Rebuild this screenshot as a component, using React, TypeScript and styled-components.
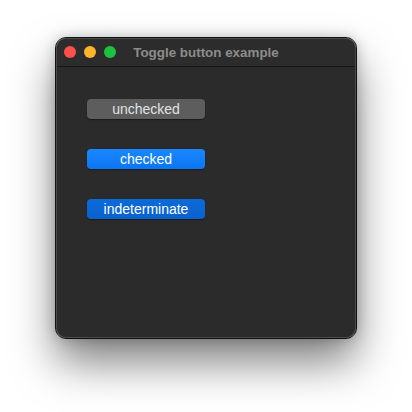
import styled, { createGlobalStyle } from "styled-components";

const GlobalStyle = createGlobalStyle`
  body {
    margin: 0;
    background: #ffffff;
    font-family: "Liberation Sans", Arial, sans-serif;
  }
`;

const Page = styled.div`
  width: 412px;
  height: 412px;
  box-sizing: border-box;
  padding: 38px 0 0 56px;
`;

const Window = styled.div`
  width: 300px;
  height: 300px;
  box-sizing: border-box;
  background: #2b2b2b;
  border: 1px solid #4a4a4a;
  outline: 1px solid #111;
  border-radius: 10px;
  box-shadow: 0 24px 44px rgba(0, 0, 0, 0.5), 0 0 14px rgba(0, 0, 0, 0.25);
  overflow: hidden;
  display: flex;
  flex-direction: column;
`;

const TitleBar = styled.div`
  position: relative;
  height: 27px;
  flex: none;
  display: flex;
  align-items: center;
  justify-content: center;
  border-bottom: 1px solid #151515;
  background: #2c2c2c;
`;

const Lights = styled.div`
  position: absolute;
  left: 7px;
  top: 7px;
  display: flex;
  gap: 8px;
`;

const Light = styled.span<{ $color: string }>`
  width: 12px;
  height: 12px;
  border-radius: 50%;
  background: ${(p) => p.$color};
`;

const Title = styled.div`
  font-size: 13.4px;
  font-weight: bold;
  color: #8c8c8c;
`;

const Content = styled.div`
  display: flex;
  flex-direction: column;
  align-items: flex-start;
  gap: 30px;
  padding: 32px 0 0 30px;
`;

type State = "unchecked" | "checked" | "indeterminate";

const Toggle = styled.button<{ $state: State }>`
  width: 118px;
  height: 20px;
  border: none;
  border-radius: 4px;
  padding: 0;
  font-family: "Liberation Sans", Arial, sans-serif;
  font-size: 14px;
  line-height: 20px;
  color: ${(p) => (p.$state === "unchecked" ? "#e2e2e2" : "#ffffff")};
  background: ${(p) =>
    p.$state === "unchecked"
      ? "#5d5d5d"
      : p.$state === "checked"
      ? "linear-gradient(#1a86ff, #0a76f4)"
      : "linear-gradient(#0b6ada, #0962cc)"};
  box-shadow: 0 0.5px 1px rgba(0, 0, 0, 0.4);
`;

export default function App() {
  return (
    <Page>
      <GlobalStyle />
      <Window>
        <TitleBar>
          <Lights>
            <Light $color="#fe4f4b" />
            <Light $color="#feb42a" />
            <Light $color="#1ec23f" />
          </Lights>
          <Title>Toggle button example</Title>
        </TitleBar>
        <Content>
          <Toggle $state="unchecked">unchecked</Toggle>
          <Toggle $state="checked">checked</Toggle>
          <Toggle $state="indeterminate">indeterminate</Toggle>
        </Content>
      </Window>
    </Page>
  );
}
